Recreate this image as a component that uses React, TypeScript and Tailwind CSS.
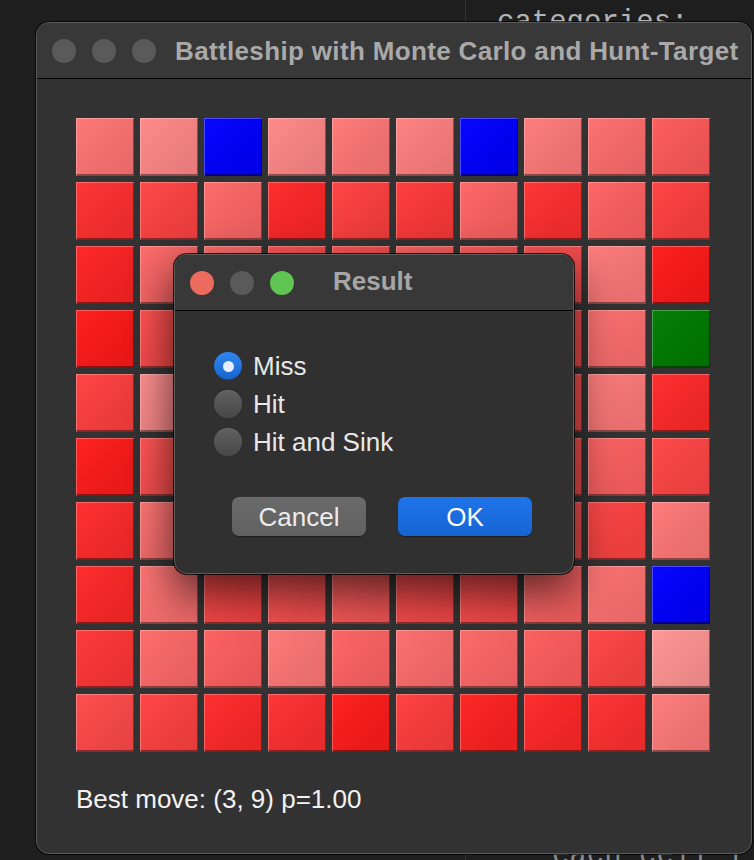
const BLUE = '#0000ff';
const GREEN = '#007c00';

const cells: string[][] = [
  ['#ff7575', '#ff8888', BLUE, '#ff8888', '#ff7878', '#ff8080', BLUE, '#ff7a7a', '#ff6e6e', '#ff5a5a'],
  ['#ff3030', '#ff4444', '#ff6868', '#ff2828', '#ff4040', '#ff3a3a', '#ff6464', '#ff3030', '#ff6262', '#ff4040'],
  ['#ff2424', '#ff6868', '#ff6a6a', '#ff5050', '#ff5050', '#ff6060', '#ff5a5a', '#ff5050', '#ff7a7a', '#ff1a1a'],
  ['#ff1a1a', '#ff4c4c', '#ff5050', '#ff5050', '#ff5050', '#ff5050', '#ff5050', '#ff5050', '#ff7070', GREEN],
  ['#ff4040', '#ff8c8c', '#ff5050', '#ff5050', '#ff5050', '#ff5050', '#ff5050', '#ff5050', '#ff7a7a', '#ff2a2a'],
  ['#ff1c1c', '#ff5050', '#ff5050', '#ff5050', '#ff5050', '#ff5050', '#ff5050', '#ff5050', '#ff6262', '#ff4646'],
  ['#ff2c2c', '#ff7070', '#ff5050', '#ff5050', '#ff5050', '#ff5050', '#ff5050', '#ff5050', '#ff4444', '#ff7878'],
  ['#ff2828', '#ff7272', '#ff4848', '#ff5252', '#ff5a5a', '#ff4c4c', '#ff4c4c', '#ff6464', '#ff7272', BLUE],
  ['#ff3636', '#ff6a6a', '#ff6060', '#ff7878', '#ff6464', '#ff6e6e', '#ff6868', '#ff5e5e', '#ff4444', '#ff9494'],
  ['#ff4a4a', '#ff4242', '#ff2a2a', '#ff3030', '#ff1c1c', '#ff3e3e', '#ff2222', '#ff2828', '#ff3030', '#ff7a7a'],
];

const sans = 'font-["Liberation_Sans",Arial,sans-serif]';

function Lights({ active }: { active?: boolean }) {
  return (
    <div className="flex gap-4">
      <span className={`w-6 h-6 rounded-full ${active ? 'bg-[#ec6a5e]' : 'bg-[#5a5a5a]'}`} />
      <span className="w-6 h-6 rounded-full bg-[#5a5a5a]" />
      <span className={`w-6 h-6 rounded-full ${active ? 'bg-[#61c554]' : 'bg-[#5a5a5a]'}`} />
    </div>
  );
}

function Radio({ label, checked }: { label: string; checked?: boolean }) {
  return (
    <div className="flex items-center h-[38px] gap-[11px]">
      {checked ? (
        <span className="w-[28px] h-[28px] rounded-full bg-linear-to-b from-[#2f86f0] to-[#1a64cf] flex items-center justify-center shadow-[inset_0_-1px_0_rgba(0,0,0,0.25)]">
          <span className="w-[11px] h-[11px] rounded-full bg-[#e4eefc]" />
        </span>
      ) : (
        <span className="w-[28px] h-[28px] rounded-full bg-linear-to-b from-[#606060] to-[#484848] shadow-[inset_0_1px_0_rgba(255,255,255,0.08)]" />
      )}
      <span className="text-[26px] leading-[30px] text-[#e8e8e8]">{label}</span>
    </div>
  );
}

export default function App() {
  return (
    <div className={`relative w-[754px] h-[860px] overflow-hidden bg-[#1e1e1e] ${sans}`}>
      {/* editor behind the windows */}
      <div className="absolute left-[465px] top-0 w-px h-full bg-[#333333]" />
      <div className='absolute left-[497px] top-[5px] font-["Liberation_Mono",monospace] text-[29px] leading-[36px] text-[#b4b4b4]'>
        categories:
      </div>
      <div className='absolute left-[552px] top-[838px] font-["Liberation_Mono",monospace] text-[29px] leading-[36px] text-[#8c8c8c]'>
        each cell 1
      </div>

      {/* main window */}
      <div className="absolute left-[36px] top-[22px] w-[716px] h-[832px] rounded-[13px] bg-[#323232] border border-[#5a5a5a] shadow-[0_0_0_1px_rgba(0,0,0,0.7)] overflow-hidden flex flex-col">
        <div className="h-[56px] shrink-0 bg-[#383838] border-b border-black flex items-center pl-[15px]">
          <Lights />
          <span className="ml-[19px] text-[26px] font-bold text-[#a9a9a9] leading-none tracking-[0.35px]">
            Battleship with Monte Carlo and Hunt-Target
          </span>
        </div>
        <div className="pl-[39px] pt-[39px]">
          <div className="grid grid-cols-[repeat(10,58px)] auto-rows-[58px] gap-[6px]">
            {cells.flatMap((row, r) =>
              row.map((c, i) => (
                <div
                  key={`${r}-${i}`}
                  className="bg-linear-to-br from-white/[0.03] to-black/10 shadow-[inset_1px_1px_0_rgba(255,255,255,0.28),inset_-1px_-2px_0_rgba(0,0,0,0.4)]"
                  style={{ backgroundColor: c }}
                />
              ))
            )}
          </div>
          <div className="mt-[32px] text-[26px] leading-[30px] text-[#f2f2f2]">Best move: (3, 9) p=1.00</div>
        </div>
      </div>

      {/* result dialog */}
      <div className="absolute left-[174px] top-[254px] w-[400px] h-[320px] rounded-[13px] bg-[#303030] border border-[#5c5c5c] shadow-[0_0_0_1px_rgba(0,0,0,0.8),0_18px_44px_rgba(0,0,0,0.65)] overflow-hidden flex flex-col">
        <div className="h-[56px] shrink-0 bg-[#383838] border-b border-black flex items-center pl-[15px]">
          <Lights active />
          <span className="ml-[39px] -mt-[3px] text-[26px] font-bold text-[#a6a6a6] leading-none">Result</span>
        </div>
        <div className="pl-[39px] pt-[36px]">
          <Radio label="Miss" checked />
          <Radio label="Hit" />
          <Radio label="Hit and Sink" />
          <div className="flex gap-[32px] mt-[36px] ml-[18px]">
            <button className="w-[134px] h-[39px] rounded-[7px] bg-linear-to-b from-[#6a6a6a] to-[#616161] text-[26px] leading-none text-[#ececec] shadow-[0_1px_1px_rgba(0,0,0,0.4)]">
              Cancel
            </button>
            <button className="w-[134px] h-[39px] rounded-[7px] bg-linear-to-b from-[#1f74ea] to-[#1664d2] text-[26px] leading-none text-white shadow-[0_1px_1px_rgba(0,0,0,0.4)]">
              OK
            </button>
          </div>
        </div>
      </div>
    </div>
  );
}
